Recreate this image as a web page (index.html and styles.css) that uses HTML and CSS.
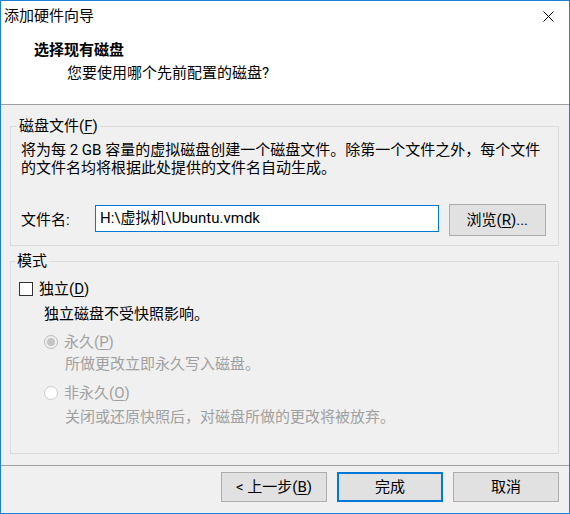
FILE: index.html
```html
<!DOCTYPE html>
<html>
<head>
<meta charset="utf-8">
<link rel="stylesheet" href="styles.css">
</head>
<body>
<div class="window">
  <div class="titlebar">
    <span class="title">添加硬件向导</span>
    <svg class="close" width="11" height="11" viewBox="0 0 11 11"><path d="M0.5 0.5 L10.5 10.5 M10.5 0.5 L0.5 10.5" stroke="#000" stroke-width="1" fill="none"/></svg>
  </div>
  <div class="header">
    <div class="heading">选择现有磁盘</div>
    <div class="subheading">您要使用哪个先前配置的磁盘?</div>
  </div>
  <div class="content">
    <fieldset class="group group-file">
      <legend>磁盘文件(<u>F</u>)</legend>
      <div class="desc">
        <div class="desc-line">将为每 2 GB 容量的虚拟磁盘创建一个磁盘文件。除第一个文件之外，每个文件</div>
        <div class="desc-line">的文件名均将根据此处提供的文件名自动生成。</div>
      </div>
      <div class="file-row">
        <span class="file-label">文件名:</span>
        <div class="input">H:\虚拟机\Ubuntu.vmdk</div>
        <div class="btn browse">浏览(<u>R</u>)...</div>
      </div>
    </fieldset>
    <fieldset class="group group-mode">
      <legend>模式</legend>
      <div class="check-row"><span class="checkbox"></span><span>独立(<u>D</u>)</span></div>
      <div class="note note-main">独立磁盘不受快照影响。</div>
      <div class="radio-row r1"><span class="radio checked"><span class="dot"></span></span><span>永久(<u>P</u>)</span></div>
      <div class="note disabled n2">所做更改立即永久写入磁盘。</div>
      <div class="radio-row r2"><span class="radio"></span><span>非永久(<u>O</u>)</span></div>
      <div class="note disabled n3">关闭或还原快照后，对磁盘所做的更改将被放弃。</div>
    </fieldset>
  </div>
  <div class="footer">
    <div class="btn">&lt; 上一步(<u>B</u>)</div>
    <div class="btn default">完成</div>
    <div class="btn">取消</div>
  </div>
</div>
</body>
</html>
```
FILE: styles.css
```css
* { box-sizing: border-box; }
html, body { margin: 0; padding: 0; }
body {
  font-family: Roboto, "Noto Sans CJK SC", sans-serif;
  font-size: 15px;
  line-height: 20px;
  color: #000;
  background: #fff;
}
u { text-decoration: underline; text-underline-offset: 2px; }
.window {
  width: 570px;
  height: 514px;
  border: 1px solid #1c7fd6;
  display: flex;
  flex-direction: column;
  background: #f0f0f0;
}
.titlebar {
  height: 30px;
  flex: none;
  background: #fff;
  display: flex;
  align-items: center;
  justify-content: space-between;
  padding: 0 15px 0 3px;
}
.title { line-height: 20px; }
.close { display: block; }
.header {
  height: 74px;
  flex: none;
  background: #fff;
  border-bottom: 1px solid #a0a0a0;
  padding: 9px 0 0 33px;
}
.heading { font-weight: bold; }
.subheading { margin-top: 3px; padding-left: 33px; }
.content {
  flex: 1;
  padding: 11px 10px 0 9px;
  display: flex;
  flex-direction: column;
}
.group {
  margin: 0;
  border: 1px solid #dcdcdc;
  padding: 0 12px 0 10px;
  min-width: 0;
}
.group legend {
  padding: 0 2px;
  margin-left: -4px;
  line-height: 20px;
}
.group-file { padding-bottom: 9px; }
.desc { margin-top: 5px; }
.desc-line { height: 18px; line-height: 18px; white-space: nowrap; }
.file-row {
  display: flex;
  align-items: center;
  margin-top: 27px;
}
.file-label { width: 74px; flex: none; }
.input {
  width: 346px;
  height: 27px;
  border: 1px solid #0078d7;
  background: #fff;
  padding: 0 4px;
  line-height: 25px;
  margin-top: -3px;
}
.btn {
  height: 30px;
  width: 106px;
  border: 1px solid #adadad;
  background: #e1e1e1;
  display: flex;
  align-items: center;
  justify-content: center;
}
.browse { width: 98px; height: 32px; margin-left: 10px; }
.group-mode { margin-top: 5px; padding-bottom: 26px; padding-left: 8px; }
.check-row { display: flex; align-items: center; margin-top: 8px; }
.checkbox {
  width: 14px; height: 14px;
  border: 1px solid #333;
  background: #fff;
  margin-right: 6px;
}
.note { margin-left: 25px; }
.note-main { margin-top: 5px; }
.disabled { color: #a0a0a0; }
.radio-row { display: flex; align-items: center; margin-left: 25px; color: #a0a0a0; }
.r1 { margin-top: 8px; }
.r2 { margin-top: 9px; }
.n2, .n3 { margin-left: 46px; }
.n2 { margin-top: 2px; }
.n3 { margin-top: 4px; }
.radio {
  width: 14px; height: 14px;
  border-radius: 50%;
  border: 1px solid #cccccc;
  background: #fff;
  margin-right: 6px;
  display: flex;
  align-items: center;
  justify-content: center;
}
.radio.checked { border-color: #bcbcbc; background: #f0f0f0; }
.radio .dot { width: 8px; height: 8px; border-radius: 50%; background: #c4c4c4; }
.footer {
  height: 48px;
  flex: none;
  border-top: 1px solid #a0a0a0;
  display: flex;
  justify-content: flex-end;
  gap: 10px;
  padding: 6px 10px 0 0;
}
.footer .btn { height: 30px; }
.btn.default { border: 2px solid #0078d7; }
```
